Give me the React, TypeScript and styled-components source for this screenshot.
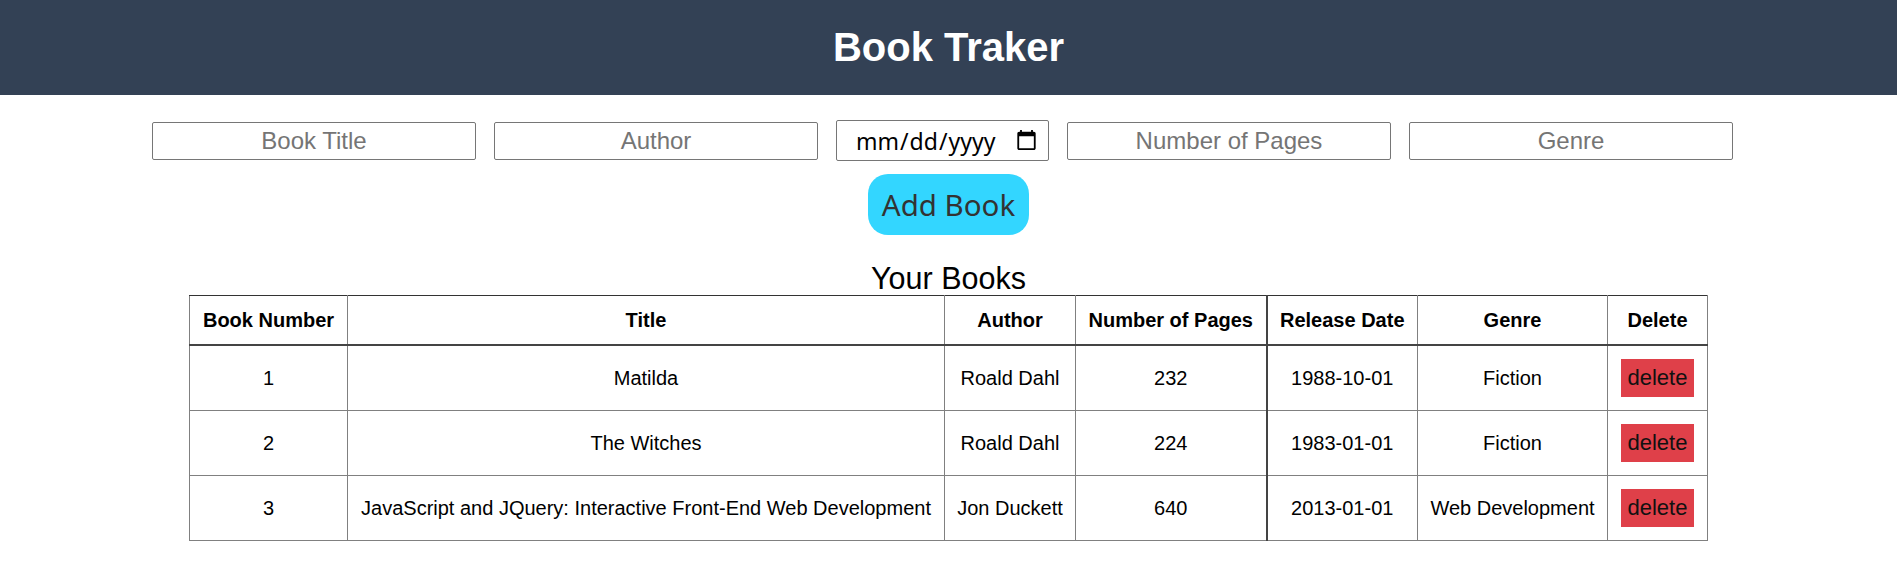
import styled, { createGlobalStyle } from 'styled-components'

interface Book {
  id: number
  title: string
  author: string
  pages: number
  released: string
  genre: string
}

const books: Book[] = [
  { id: 1, title: 'Matilda', author: 'Roald Dahl', pages: 232, released: '1988-10-01', genre: 'Fiction' },
  { id: 2, title: 'The Witches', author: 'Roald Dahl', pages: 224, released: '1983-01-01', genre: 'Fiction' },
  {
    id: 3,
    title: 'JavaScript and JQuery: Interactive Front-End Web Development',
    author: 'Jon Duckett',
    pages: 640,
    released: '2013-01-01',
    genre: 'Web Development',
  },
]

const columns = [
  { label: 'Book Number', width: 158 },
  { label: 'Title', width: 597 },
  { label: 'Author', width: 131 },
  { label: 'Number of Pages', width: 191 },
  { label: 'Release Date', width: 151 },
  { label: 'Genre', width: 190 },
  { label: 'Delete', width: 100 },
]

const GlobalStyle = createGlobalStyle`
  body {
    margin: 0;
    font-family: "Liberation Sans", Arial, sans-serif;
    color: #000;
    background: #fff;
  }
`

const Header = styled.header`
  height: 95px;
  background: #334155;
  display: flex;
  align-items: center;
  justify-content: center;
`

const Title = styled.h1`
  margin: 0;
  color: #fff;
  font-size: 40px;
  font-weight: bold;
`

const Form = styled.form`
  display: flex;
  flex-direction: column;
  align-items: center;
  padding-top: 25px;
`

const InputRow = styled.div`
  display: flex;
  align-items: center;
  justify-content: center;
  gap: 18px;
  padding-right: 12px;
`

const TextInput = styled.input`
  box-sizing: border-box;
  width: 324px;
  height: 38px;
  padding: 2px 6px;
  border: 1px solid #767676;
  border-radius: 2px;
  font-family: "Liberation Sans", Arial, sans-serif;
  font-size: 24px;
  text-align: center;
  color: #000;

  &::placeholder {
    color: #757575;
  }
`

const DateInput = styled.input`
  box-sizing: border-box;
  width: 213px;
  height: 41px;
  padding: 1px 8px 1px 18px;
  border: 1px solid #767676;
  border-radius: 2px;
  font-family: "Noto Sans", sans-serif;
  font-size: 23px;
  color: #000;
`

const AddButton = styled.button`
  margin-top: 13px;
  height: 61px;
  padding: 0 14px;
  border: none;
  border-radius: 20px;
  background: #33d6ff;
  color: #333;
  font-family: "Noto Sans", sans-serif;
  font-size: 29.5px;
  cursor: pointer;
`

const Section = styled.section`
  display: flex;
  justify-content: center;
  margin-top: 26px;
`

const Table = styled.table`
  width: 1518px;
  table-layout: fixed;
  border-collapse: collapse;
  border: 1px solid #808080;
  border-top-color: #333;
  border-left-color: #555;
  font-size: 20px;
`

const Caption = styled.caption`
  font-size: 30.5px;
  line-height: 34px;
`

const HeadRow = styled.tr`
  border-bottom: 2px solid #444;
`

const Th = styled.th<{ $strong?: boolean }>`
  padding: 12.5px 4px;
  border: 1px solid #808080;
  border-top-color: #333;
  border-left: ${p => (p.$strong ? '2px solid #444' : '1px solid #808080')};
  font-weight: bold;
  text-align: center;
  white-space: nowrap;
`

const Td = styled.td<{ $strong?: boolean }>`
  height: 39px;
  padding: 12.5px 4px;
  border: 1px solid #808080;
  border-left: ${p => (p.$strong ? '2px solid #444' : '1px solid #808080')};
  text-align: center;
  white-space: nowrap;
`

const DeleteButton = styled.button`
  padding: 6px 7px;
  border: none;
  background: #df4049;
  color: #111;
  font-family: "Liberation Sans", Arial, sans-serif;
  font-size: 22px;
  cursor: pointer;
`

const App = () => (
  <>
    <GlobalStyle />
    <Header>
      <Title>Book Traker</Title>
    </Header>
    <Form onSubmit={e => e.preventDefault()}>
      <InputRow>
        <TextInput placeholder="Book Title" />
        <TextInput placeholder="Author" />
        <DateInput type="date" />
        <TextInput placeholder="Number of Pages" />
        <TextInput placeholder="Genre" />
      </InputRow>
      <AddButton type="submit">Add Book</AddButton>
    </Form>
    <Section>
      <Table>
        <Caption>Your Books</Caption>
        <colgroup>
          {columns.map(c => (
            <col key={c.label} style={{ width: c.width }} />
          ))}
        </colgroup>
        <thead>
          <HeadRow>
            {columns.map(c => (
              <Th key={c.label} $strong={c.label === 'Release Date'}>
                {c.label}
              </Th>
            ))}
          </HeadRow>
        </thead>
        <tbody>
          {books.map(b => (
            <tr key={b.id}>
              <Td>{b.id}</Td>
              <Td>{b.title}</Td>
              <Td>{b.author}</Td>
              <Td>{b.pages}</Td>
              <Td $strong>{b.released}</Td>
              <Td>{b.genre}</Td>
              <Td>
                <DeleteButton>delete</DeleteButton>
              </Td>
            </tr>
          ))}
        </tbody>
      </Table>
    </Section>
  </>
)

export default App
